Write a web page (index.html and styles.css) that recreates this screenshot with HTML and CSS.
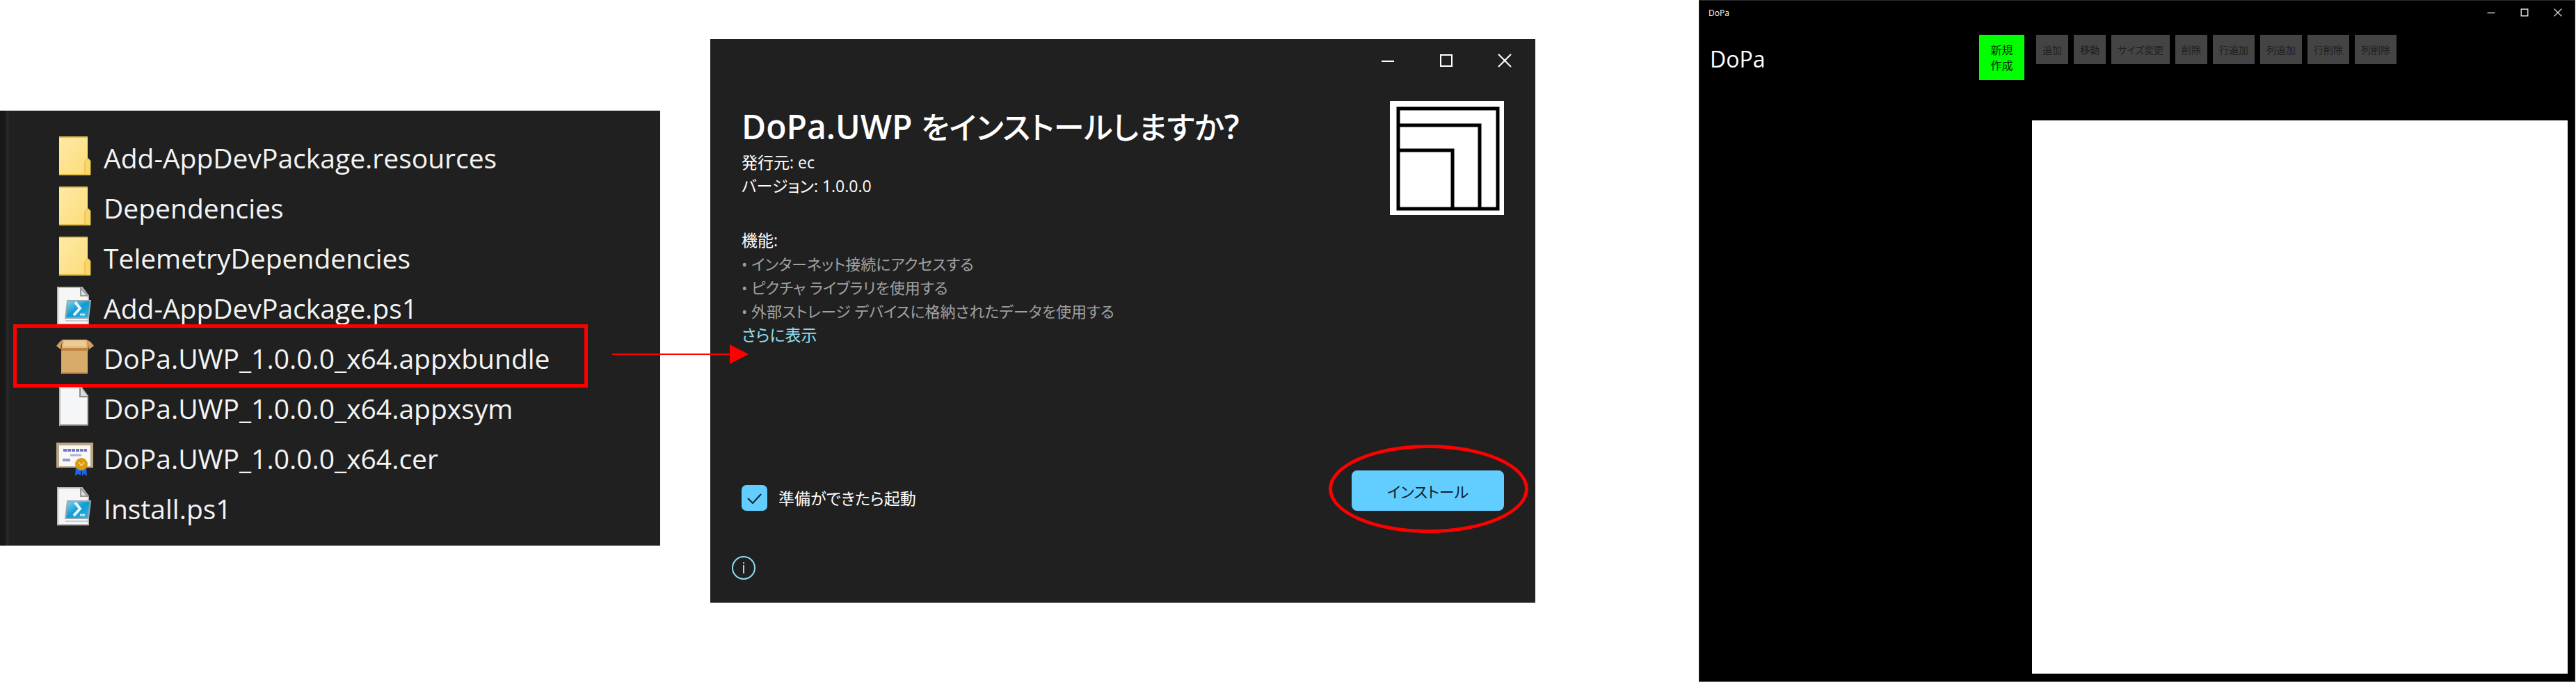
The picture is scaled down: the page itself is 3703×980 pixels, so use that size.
FILE: index.html
```html
<!DOCTYPE html>
<html lang="ja">
<head>
<meta charset="utf-8">
<title>DoPa</title>
<link rel="stylesheet" href="styles.css">
</head>
<body>
<svg class="defs" width="0" height="0" aria-hidden="true">
  <defs>
    <linearGradient id="folderFill" x1="0" y1="0" x2="1" y2="1">
      <stop offset="0" stop-color="#ffeaa6"/><stop offset="1" stop-color="#fbdc77"/>
    </linearGradient>
    <linearGradient id="blueFill" x1="0" y1="0" x2="1" y2="1">
      <stop offset="0" stop-color="#8bd8f2"/><stop offset="0.5" stop-color="#0f9bd3"/><stop offset="1" stop-color="#35b5e2"/>
    </linearGradient>
    <symbol id="folder" viewBox="0 0 56 56">
      <path d="M4 0H45V31L49 35V56H4Z" fill="url(#folderFill)"/>
      <path d="M4 1H45" stroke="#e6c14c" stroke-width="2"/>
      <path d="M4 55H49" stroke="#e3bd45" stroke-width="2"/>
      <path d="M41 54V36L45 31L49 35V55" fill="#f9d768" stroke="#dfb53f" stroke-width="1"/>
    </symbol>
    <symbol id="script" viewBox="0 0 56 56">
      <path d="M2 1H37L46 13V54H2Z" fill="#f7f6f6" stroke="#b9b9b9" stroke-width="2"/>
      <path d="M35 2V13H45Z" fill="#e3e3e3" stroke="#999" stroke-width="2"/>
      <path d="M16 20H49L46 45H13Z" fill="url(#blueFill)" stroke="#9ba9b0" stroke-width="2"/>
      <path d="M27 22L34 31L25 41" fill="none" stroke="#e6f6fc" stroke-width="4"/>
      <path d="M34 40H41" stroke="#bfe6f5" stroke-width="3"/>
      <path d="M13 49H45" stroke="#c5cdd0" stroke-width="2"/>
    </symbol>
    <symbol id="box" viewBox="0 0 56 56">
      <path d="M9 4H44L46 20H7Z" fill="#e4bd83"/>
      <path d="M12 6H41L43 13H10Z" fill="#eccb98"/>
      <path d="M7 16H45V53H7Z" fill="#d9ab6b"/>
      <path d="M7 16H45V20H7Z" fill="#bd853f"/>
      <path d="M9 4L6 18L0 13L5 7Z M43 4L47 18L54 13L49 7Z" fill="#d39f5c"/>
      <path d="M8 52H45" stroke="#b98a4b" stroke-width="2"/>
    </symbol>
    <symbol id="page" viewBox="0 0 56 56">
      <path d="M5 1H36L45 13V55H5Z" fill="#f5f6f7" stroke="#b5b7b8" stroke-width="2"/>
      <path d="M34 1V14H45" fill="#dcdcdc" stroke="#8c8c8c" stroke-width="2"/>
      <path d="M5 55H46" stroke="#777" stroke-width="2"/>
    </symbol>
    <symbol id="cert" viewBox="0 0 56 56">
      <path d="M0 8H53V44H0Z" fill="#bda684"/>
      <path d="M4 12H49V42H4Z" fill="#faf8f6"/>
      <path d="M10 19H44" stroke="#7377c4" stroke-width="4" stroke-dasharray="5 1"/>
      <path d="M20 26H36" stroke="#aeb2de" stroke-width="3"/>
      <path d="M9 33H20" stroke="#9296d0" stroke-width="4"/>
      <path d="M28 42H35V55L31 53L27 56Z M36 42H43L44 56L40 53L37 56Z" fill="#1f63e8"/>
      <circle cx="36" cy="39" r="9" fill="#d99a0d"/>
      <path d="M32 36L36 41L40 36" fill="none" stroke="#f3d270" stroke-width="2"/>
    </symbol>
    <symbol id="minimize" viewBox="0 0 20 20"><path d="M1 11H19" fill="none" stroke="currentColor" stroke-width="2"/></symbol>
    <symbol id="maximize" viewBox="0 0 20 20"><path d="M2 2H18V18H2Z" fill="none" stroke="currentColor" stroke-width="2"/></symbol>
    <symbol id="close" viewBox="0 0 20 20"><path d="M1 1L19 19M19 1L1 19" fill="none" stroke="currentColor" stroke-width="2"/></symbol>
  </defs>
</svg>

<main class="guide">
  <section class="explorer" aria-label="ファイル一覧">
    <ul class="files">
      <li class="file"><svg class="file-icon"><use href="#folder"/></svg><span>Add-AppDevPackage.resources</span></li>
      <li class="file"><svg class="file-icon"><use href="#folder"/></svg><span>Dependencies</span></li>
      <li class="file"><svg class="file-icon"><use href="#folder"/></svg><span>TelemetryDependencies</span></li>
      <li class="file"><svg class="file-icon"><use href="#script"/></svg><span>Add-AppDevPackage.ps1</span></li>
      <li class="file file-marked"><svg class="file-icon"><use href="#box"/></svg><span>DoPa.UWP_1.0.0.0_x64.appxbundle</span></li>
      <li class="file"><svg class="file-icon"><use href="#page"/></svg><span>DoPa.UWP_1.0.0.0_x64.appxsym</span></li>
      <li class="file"><svg class="file-icon"><use href="#cert"/></svg><span>DoPa.UWP_1.0.0.0_x64.cer</span></li>
      <li class="file"><svg class="file-icon"><use href="#script"/></svg><span>Install.ps1</span></li>
    </ul>
  </section>

  <div class="arrow" aria-hidden="true"></div>

  <section class="installer">
    <div class="installer-bar">
      <button class="caption" aria-label="最小化"><svg><use href="#minimize"/></svg></button>
      <button class="caption" aria-label="最大化"><svg><use href="#maximize"/></svg></button>
      <button class="caption" aria-label="閉じる"><svg><use href="#close"/></svg></button>
    </div>
    <div class="installer-head">
      <div>
        <h1 class="installer-title">DoPa.UWP <span class="title-kana">をインストールしますか</span>?</h1>
        <p class="line">発行元: ec</p>
        <p class="line">バージョン: 1.0.0.0</p>
      </div>
      <svg class="logo" viewBox="0 0 164 164">
        <path d="M0 0H164V164H0Z" fill="#fff"/>
        <path d="M12 11H155V155H12Z M12 35H129V155 M12 71H90V155" fill="none" stroke="#000" stroke-width="5"/>
      </svg>
    </div>
    <div class="features">
      <h2 class="line">機能:</h2>
      <ul class="feature-list">
        <li class="line">• インターネット接続にアクセスする</li>
        <li class="line">• ピクチャ ライブラリを使用する</li>
        <li class="line">• 外部ストレージ デバイスに格納されたデータを使用する</li>
      </ul>
      <a class="line more" href="#more">さらに表示</a>
    </div>
    <div class="installer-actions">
      <label class="launch">
        <span class="tick">
          <input class="tick-box" type="checkbox" checked>
          <svg class="tick-mark" viewBox="0 0 37 37"><path d="M9 19L16 26L28 13" fill="none" stroke="#10222c" stroke-width="2"/></svg>
        </span>
        準備ができたら起動
      </label>
      <button class="install">インストール</button>
    </div>
    <a class="info" href="#info" aria-label="情報">
      <svg viewBox="0 0 36 36"><circle cx="18" cy="18" r="16" fill="none" stroke="#8fdcf2" stroke-width="2"/><path d="M18 14V26M18 10V12" stroke="#8fdcf2" stroke-width="2"/></svg>
    </a>
  </section>

  <section class="app">
    <header class="app-bar">
      <span>DoPa</span>
      <div class="app-captions">
        <button class="caption caption-small" aria-label="最小化"><svg><use href="#minimize"/></svg></button>
        <button class="caption caption-small" aria-label="最大化"><svg><use href="#maximize"/></svg></button>
        <button class="caption caption-small" aria-label="閉じる"><svg><use href="#close"/></svg></button>
      </div>
    </header>
    <div class="app-head">
      <h2 class="app-title">DoPa</h2>
      <button class="create">新規<br>作成</button>
      <div class="tools">
        <button class="tool" disabled>追加</button>
        <button class="tool" disabled>移動</button>
        <button class="tool" disabled>サイズ変更</button>
        <button class="tool" disabled>削除</button>
        <button class="tool" disabled>行追加</button>
        <button class="tool" disabled>列追加</button>
        <button class="tool" disabled>行削除</button>
        <button class="tool" disabled>列削除</button>
      </div>
    </div>
    <div class="app-body"><div class="canvas"></div></div>
  </section>
</main>
</body>
</html>
```
FILE: styles.css
```css
* { box-sizing: border-box; }

body {
  margin: 0;
  background: #fff;
  font-family: "Open Sans", "Noto Sans CJK JP", sans-serif;
  font-feature-settings: "palt";
}

h1, h2, p, ul { margin: 0; padding: 0; font-weight: 400; }
ul { list-style: none; }
button { border: 0; padding: 0; background: none; color: inherit; font: inherit; font-feature-settings: inherit; }
svg { display: block; }
.defs { position: absolute; }

.guide {
  position: relative;
  display: grid;
  grid-template-columns: 949fr 72fr 1186fr 235fr 1260fr 1fr;
  align-items: start;
  min-height: 100vh;
}

/* File list */
.explorer {
  grid-column: 1;
  margin-top: 159px;
  padding: 29px 104px 20px 11px;
  border-left: 8px solid #171717;
  background: #202020;
  box-shadow: inset 5px 0 #262626;
  color: #f4f4f4;
  font-size: 39px;
  line-height: 72px;
}
.file {
  position: relative;
  display: flex;
  align-items: center;
  gap: 12px;
  height: 72px;
  padding-left: 62px;
  white-space: nowrap;
}
.file span { padding-top: 5px; }
.file-icon { width: 56px; height: 56px; flex: none; }
.file-marked::after {
  content: "";
  position: absolute;
  inset: -10px 0 -9px 0;
  border: 5px solid #f00;
}

/* Pointer from the bundle to the installer */
.arrow {
  position: absolute;
  z-index: 1;
  top: 495px;
  left: 23.76%;
  width: 5.3%;
  height: 28px;
  background: linear-gradient(#f00, #f00) left center / calc(100% - 20px) 2px no-repeat;
}
.arrow::after {
  content: "";
  position: absolute;
  right: 0;
  border: 14px solid transparent;
  border-right: 0;
  border-left: 27px solid #f00;
}

/* Installer dialog */
.installer {
  grid-column: 3;
  margin-top: 56px;
  padding: 0 45px 32px;
  background: #202020;
  color: #fff;
  font-size: 23px;
}
.installer-bar {
  display: flex;
  justify-content: flex-end;
  gap: 64px;
  margin-right: -11px;
  padding-top: 21px;
}
.caption svg { width: 20px; height: 20px; }
.installer-head {
  display: flex;
  justify-content: space-between;
  padding-top: 48px;
}
.installer-title { margin-top: 4px; font-size: 48px; font-weight: 600; line-height: 66px; white-space: nowrap; }
.title-kana { font-size: 44px; font-weight: 500; }
.line { display: block; line-height: 34px; font-size: 23px; white-space: nowrap; }
.logo { width: 164px; height: 164px; }
.features { padding-top: 19px; }
.feature-list { color: #a0a0a0; }
.feature-list .line { font-size: 22px; }
.more { color: #8fdcf2; text-decoration: none; }
.installer-actions {
  display: flex;
  justify-content: space-between;
  align-items: flex-start;
  padding-top: 178px;
}
.launch { display: flex; align-items: center; gap: 16px; margin-top: 21px; line-height: 34px; }
.tick { display: grid; }
.tick > * { grid-area: 1 / 1; width: 37px; height: 37px; margin: 0; }
.tick-box { appearance: none; border-radius: 7px; background: #62cdff; }
.tick-mark { pointer-events: none; }
.install {
  position: relative;
  width: 219px;
  height: 58px;
  border-radius: 8px;
  background: #62cdff;
  color: #10222c;
  font-size: 22px;
}
.install::after {
  content: "";
  position: absolute;
  inset: -37px -35px -32px -33px;
  border: 5px solid #f00;
  border-radius: 50%;
}
.info { display: block; width: 36px; margin: 64px 0 0 -15px; }

/* DoPa application */
.app {
  grid-column: 5;
  display: flex;
  flex-direction: column;
  height: 100vh;
  min-height: 600px;
  padding: 0 10px 11px 0;
  border: 1px solid #2b2b2b;
  border-bottom-color: #666;
  background: #000;
  color: #fff;
}
.app-bar {
  display: flex;
  justify-content: space-between;
  align-items: center;
  height: 34px;
  padding: 0 8px 0 13px;
  font-size: 12px;
}
.app-captions { display: flex; gap: 36px; }
.caption-small svg { width: 12px; height: 12px; }
.app-head { display: flex; align-items: flex-start; height: 138px; padding-top: 15px; }
.app-title { width: 402px; padding: 12px 0 0 15px; font-size: 32px; line-height: 46px; }
.create { width: 65px; height: 65px; background: #0f0; color: #062806; font-size: 16px; line-height: 22px; }
.tools { display: flex; gap: 8px; padding-left: 17px; }
.tool { height: 42px; padding: 0 9px; background: #444; color: #1f1f1f; font-size: 14px; white-space: nowrap; }
.app-body { flex: 1; display: flex; padding-left: 478px; }
.canvas { flex: 1; background: #fff; }
```
